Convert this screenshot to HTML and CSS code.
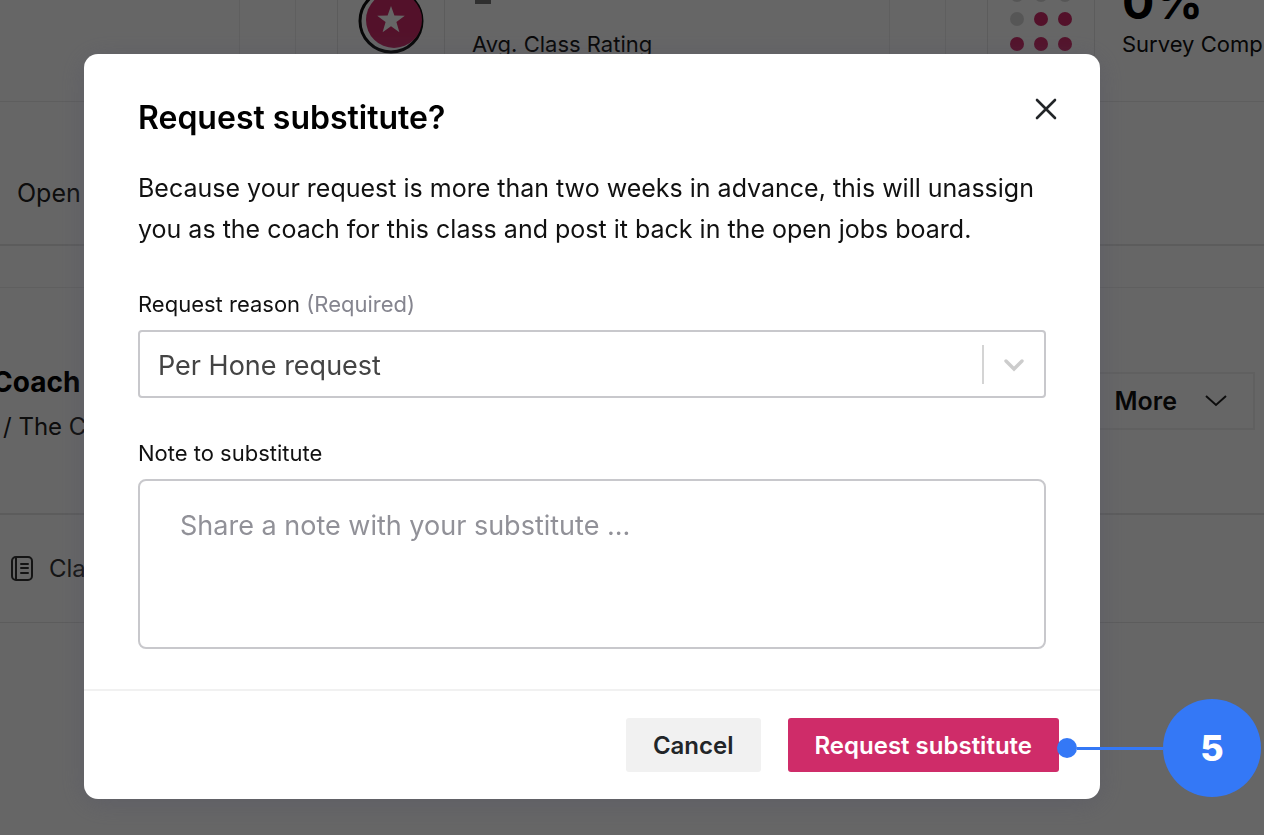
FILE: index.html
```
<!DOCTYPE html>
<html lang="en">
<head>
    <meta charset="UTF-8">
    <meta name="viewport" content="width=device-width, initial-scale=1.0">
    <title>Request substitute</title>
    <link rel="stylesheet" href="styles.css">
</head>
<body>
    <main class="page">
        <section class="stats">
            <div class="stat stat-first"></div>
            <div class="stat stat-rating">
                <div class="stat-icon">
                    <svg width="66" height="66" viewBox="0 0 66 66" aria-hidden="true">
                        <circle cx="33" cy="33" r="31" fill="#fff" stroke="#111" stroke-width="3"/>
                        <circle cx="36" cy="32" r="28" fill="#cf2c69"/>
                        <path d="M33 18l3.4 9.6 10.4.2-8.4 6.3 3 10.1-8.4-5.9-8.4 5.9 3-10.1-8.4-6.3 10.4-.2z" fill="#fff"/>
                    </svg>
                </div>
                <div class="stat-text">
                    <span class="stat-dash"></span>
                    <span class="stat-label">Avg. Class Rating</span>
                </div>
            </div>
            <div class="stat stat-survey">
                <div class="stat-icon">
                    <svg width="64" height="64" viewBox="0 0 64 64" aria-hidden="true">
                        <g fill="#d8d8d8">
                            <circle cx="8" cy="7" r="7"/>
                            <circle cx="32" cy="7" r="7"/>
                            <circle cx="56" cy="7" r="7"/>
                            <circle cx="8" cy="31" r="7"/>
                        </g>
                        <g fill="#cf2c69">
                            <circle cx="32" cy="31" r="7"/>
                            <circle cx="56" cy="31" r="7"/>
                            <circle cx="8" cy="56" r="7"/>
                            <circle cx="32" cy="56" r="7"/>
                            <circle cx="56" cy="56" r="7"/>
                        </g>
                    </svg>
                </div>
                <div class="stat-text">
                    <span class="stat-value">0%</span>
                    <span class="stat-label">Survey Comp</span>
                </div>
            </div>
        </section>
        <nav class="tabs">
            <a class="tab" href="#">Open</a>
        </nav>
        <div class="divider"></div>
        <section class="class-row">
            <div class="class-info">
                <h3 class="class-title">Coach</h3>
                <p class="class-path">/ The C</p>
            </div>
            <button class="more-btn" type="button">
                More
                <svg width="22" height="14" viewBox="0 0 22 14" fill="none" stroke="#222" stroke-width="2" aria-hidden="true">
                    <path d="M1 2l10 9 10-9"/>
                </svg>
            </button>
        </section>
        <section class="class-links">
            <svg width="24" height="26" viewBox="0 0 24 26" fill="none" stroke="#333" stroke-width="2" stroke-linecap="round" aria-hidden="true">
                <rect x="2" y="1" width="20" height="23" rx="4"/>
                <path d="M6 2v21M11 8h7M11 12h7M11 17h7"/>
            </svg>
            <a class="class-link" href="#">Cla</a>
        </section>
    </main>

    <div class="overlay">
        <div class="modal" role="dialog" aria-modal="true" aria-labelledby="modal-title">
            <div class="modal-body">
                <div class="modal-header">
                    <h2 class="modal-title" id="modal-title">Request substitute?</h2>
                    <button class="close-btn" type="button" aria-label="Close">
                        <svg width="22" height="22" viewBox="0 0 22 22" fill="none" stroke="#222528" stroke-width="2.6" stroke-linecap="round" aria-hidden="true">
                            <path d="M2 2l18 18M20 2L2 20"/>
                        </svg>
                    </button>
                </div>
                <p class="modal-text">Because your request is more than two weeks in advance, this will unassign<br>you as the coach for this class and post it back in the open jobs board.</p>
                <label class="field-label" for="reason">Request reason <span class="required">(Required)</span></label>
                <div class="select-wrap">
                    <select class="select" id="reason">
                        <option>Per Hone request</option>
                    </select>
                    <span class="select-arrow">
                        <svg width="22" height="14" viewBox="0 0 22 14" fill="none" stroke="#ccc" stroke-width="3.4" stroke-linecap="round" aria-hidden="true">
                            <path d="M3 3l8 8 8-8"/>
                        </svg>
                    </span>
                </div>
                <label class="field-label" for="note">Note to substitute</label>
                <textarea class="note" id="note" placeholder="Share a note with your substitute ..."></textarea>
            </div>
            <div class="modal-footer">
                <button class="btn" type="button">Cancel</button>
                <div class="submit-wrap">
                    <button class="btn btn-primary" type="button">Request substitute</button>
                    <div class="callout">
                        <span class="callout-dot"></span>
                        <span class="callout-line"></span>
                        <span class="callout-number">5</span>
                    </div>
                </div>
            </div>
        </div>
    </div>
</body>
</html>
```
FILE: styles.css
```
* {
    box-sizing: border-box;
}

body {
    font-family: Inter, "Liberation Sans", sans-serif;
    margin: 0;
    min-height: 100vh;
    background: #fff;
    color: #111;
    overflow: hidden;
}

h2, h3, p {
    margin: 0;
}

button, select, textarea {
    font-family: inherit;
}

svg {
    display: block;
    flex-shrink: 0;
}

/* Page under the overlay */
.stats {
    display: flex;
    gap: 55px;
    height: 102px;
    border-bottom: 1px solid #eaeaea;
}

.stat {
    display: flex;
    gap: 27px;
    height: 58px;
    border-left: 1px solid #eee;
    border-right: 1px solid #eee;
    padding-left: 41px;
}

.stat-first {
    width: 240px;
    border-left: none;
}

.stat-rating {
    flex: 1;
}

.stat-survey {
    width: 319px;
    border-right: none;
}

.stat-icon {
    width: 108px;
    flex-shrink: 0;
    border-left: 1px solid #e6e6e6;
    border-right: 1px solid #e6e6e6;
    display: flex;
    justify-content: center;
    align-items: flex-start;
}

.stat-icon svg {
    margin-top: -12px;
}

.stat-text {
    display: flex;
    flex-direction: column;
    justify-content: flex-end;
    white-space: nowrap;
}

.stat-dash {
    width: 16px;
    height: 4px;
    margin: 0 0 26px 3px;
    background: #777;
}

.stat-label {
    font-size: 22px;
    line-height: 28px;
}

.stat-value {
    margin-bottom: 4px;
    font-size: 48px;
    font-weight: 700;
    line-height: 48px;
    color: #000;
}

.tabs {
    display: flex;
    align-items: center;
    height: 144px;
    padding: 40px 17px 0;
    border-bottom: 2px solid #e6e6e6;
}

.tab {
    font-size: 25px;
    line-height: 32px;
    color: #222;
    text-decoration: none;
}

.divider {
    height: 42px;
    border-bottom: 1px solid #eee;
}

.class-row {
    display: flex;
    justify-content: space-between;
    align-items: center;
    height: 227px;
    padding-right: 9px;
    border-bottom: 2px solid #e6e6e6;
}

.class-info {
    padding-top: 8px;
}

.class-title {
    margin-left: -8px;
    font-size: 28px;
    line-height: 44px;
    color: #000;
}

.class-path {
    padding-left: 3px;
    font-size: 24px;
    line-height: 46px;
    color: #222;
}

.more-btn {
    display: flex;
    align-items: center;
    justify-content: flex-end;
    gap: 28px;
    width: 190px;
    height: 58px;
    padding: 0 26px;
    border: 2px solid #f0f0f0;
    background: none;
    font-size: 25px;
    font-weight: 600;
    color: #111;
}

.class-links {
    display: flex;
    align-items: center;
    gap: 15px;
    height: 108px;
    padding-left: 10px;
    border-bottom: 1px solid #e6e6e6;
}

.class-link {
    font-size: 24px;
    color: #333;
    text-decoration: none;
}

/* Dialog */
.overlay {
    position: fixed;
    inset: 0;
    padding: 54px 164px 36px 84px;
    background: rgba(0, 0, 0, 0.6);
}

.modal {
    background: #fff;
    border-radius: 14px;
    box-shadow: 0 4px 28px rgba(80, 80, 100, 0.4);
}

.modal-body {
    display: flex;
    flex-direction: column;
    padding: 44px 54px 40px;
}

.modal-header {
    display: flex;
    justify-content: space-between;
    align-items: flex-start;
}

.modal-title {
    font-size: 32px;
    font-weight: 600;
    line-height: 40px;
    color: #000;
}

.close-btn {
    display: flex;
    padding: 12px;
    margin: -12px -23px -12px 0;
    border: none;
    background: none;
    cursor: pointer;
}

.modal-text {
    margin: 30px 0 40px;
    font-size: 25px;
    line-height: 41px;
    color: #111;
}

.field-label {
    margin-bottom: 12px;
    font-size: 22px;
    line-height: 28px;
    color: #111;
}

.required {
    color: #85858f;
}

.select-wrap {
    position: relative;
    margin-bottom: 41px;
}

.select {
    appearance: none;
    display: block;
    width: 100%;
    height: 68px;
    padding: 2px 80px 0 18px;
    border: 2px solid #c8c8cc;
    border-radius: 4px;
    background: #fff;
    font-size: 27px;
    color: #444;
}

.select-arrow {
    position: absolute;
    top: 15px;
    right: 2px;
    display: flex;
    align-items: center;
    justify-content: center;
    width: 62px;
    height: 39px;
    border-left: 2px solid #d4d4d4;
    pointer-events: none;
}

.note {
    height: 170px;
    padding: 28px 40px;
    border: 2px solid #c8c8cc;
    border-radius: 8px;
    background: #fff;
    font-size: 27px;
    line-height: 34px;
    resize: none;
}

.note::placeholder {
    color: #919198;
}

.modal-footer {
    display: flex;
    justify-content: flex-end;
    gap: 27px;
    padding: 27px 41px;
    border-top: 2px solid #f1f1f1;
}

.btn {
    height: 54px;
    padding: 0 27px;
    border: none;
    border-radius: 3px;
    background: #f1f1f1;
    font-size: 24px;
    font-weight: 600;
    color: #222528;
    cursor: pointer;
}

.btn-primary {
    background: #cf2c69;
    color: #fff;
}

.submit-wrap {
    position: relative;
}

/* Numbered step marker */
.callout {
    position: absolute;
    top: -19px;
    left: calc(100% - 2px);
    display: flex;
    align-items: center;
}

.callout-dot {
    width: 20px;
    height: 20px;
    border-radius: 50%;
    background: #3478f6;
}

.callout-line {
    width: 86px;
    height: 3px;
    background: #3478f6;
}

.callout-number {
    display: flex;
    align-items: center;
    justify-content: center;
    width: 98px;
    height: 98px;
    border-radius: 50%;
    background: #3478f6;
    font-size: 36px;
    font-weight: 800;
    color: #fff;
}
```
